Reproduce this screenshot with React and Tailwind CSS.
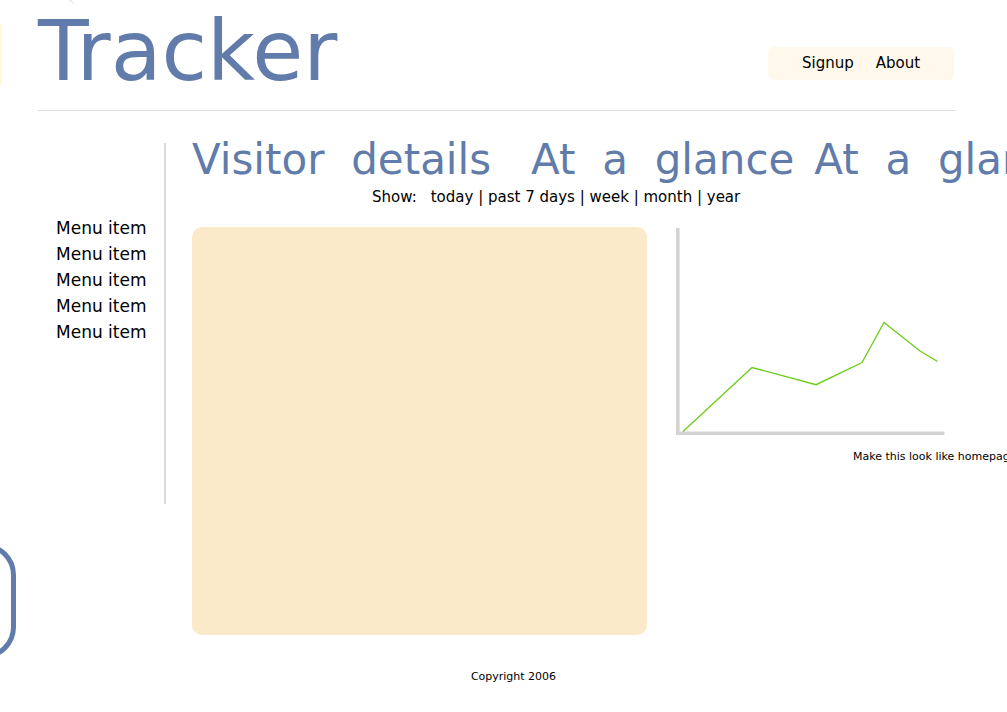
const menuItems = ["Menu item", "Menu item", "Menu item", "Menu item", "Menu item"];
const ranges = ["today", "past 7 days", "week", "month", "year"];

function Header() {
  return (
    <header className="mr-[52px] ml-[38px] flex h-[111px] items-start justify-between border-b border-[#dcdcdc]">
      <h1 className="text-[83px] leading-[104px] whitespace-nowrap text-[#617caa]">Tracker</h1>
      <nav
        aria-label="Account"
        className="mt-[47px] mr-px flex h-[33px] w-[186px] items-center justify-center gap-[22px] rounded-md bg-[#fff8eb] text-[15px]"
      >
        <a href="#signup">Signup</a>
        <a href="#about">About</a>
      </nav>
    </header>
  );
}

function Sidebar() {
  return (
    <nav
      aria-label="Main"
      className="ml-[38px] h-[361px] w-32 shrink-0 border-r-2 border-[#dadada] pt-[72px] pl-[18px]"
    >
      <ul className="text-[17px] leading-[26px] whitespace-nowrap">
        {menuItems.map((item, i) => (
          <li key={i}>
            <a href="#menu">{item}</a>
          </li>
        ))}
      </ul>
    </nav>
  );
}

function RangePicker() {
  return (
    <div className="mt-2 ml-[180px] flex h-6 items-center gap-[14px] text-[15px] whitespace-nowrap">
      <span>Show:</span>
      <p>
        {ranges.map((range, i) => (
          <span key={range}>
            {i > 0 && " | "}
            <a href="#range">{range}</a>
          </span>
        ))}
      </p>
    </div>
  );
}

function VisitsChart() {
  return (
    <svg width="270" height="208" viewBox="0 0 270 208" fill="none" role="img" aria-label="Visits">
      <path d="M2.8 1V206.300H269.400" stroke="#d3d3d3" strokeWidth="3.6" />
      <path
        d="M8 204.500L77 140.500L141 157.700L187 135.500L209 95.500L245 124L262.500 134.500"
        stroke="#6ccd15"
        strokeWidth="1.3"
      />
    </svg>
  );
}

export default function App() {
  return (
    <div className="relative overflow-hidden bg-white font-['DejaVu_Sans',sans-serif] text-black">
      <div className="absolute top-[22px] -left-8 h-[66px] w-[33px] rounded bg-[#fff6d8]" />
      <svg className="absolute top-0 left-[68px]" width="8" height="5" viewBox="0 0 8 5" aria-hidden="true">
        <path d="M0 0H4L6.500 4.500Z" fill="#e6edf5" />
      </svg>
      <div className="absolute top-[543px] -left-24 h-[116px] w-28 rounded-[32px] border-[5px] border-[#617caa]" />

      <Header />

      <main className="flex items-start pt-8">
        <Sidebar />
        <section className="ml-[26px] min-w-0 flex-1">
          <div className="flex h-[34px] items-center text-[42px] leading-[34px] whitespace-pre text-[#617caa]">
            <h2 className="mr-10">{"Visitor  details"}</h2>
            <h2 className="mr-5">{"At  a  glance"}</h2>
            <h2>{"At  a  glance"}</h2>
          </div>
          <RangePicker />
          <div className="mt-[18px] flex items-start gap-7 pr-[62px]">
            <div className="h-[408px] min-w-0 flex-1 rounded-[10px] bg-[#faeac9]" />
            <figure className="w-[270px] shrink-0">
              <VisitsChart />
              <figcaption className="mt-[14px] ml-[178px] text-[11px] leading-4 whitespace-nowrap">
                Make this look like homepage
              </figcaption>
            </figure>
          </div>
        </section>
      </main>

      <footer className="pt-8 pb-7 pl-5 text-center text-[11px] leading-5">Copyright 2006</footer>
    </div>
  );
}
